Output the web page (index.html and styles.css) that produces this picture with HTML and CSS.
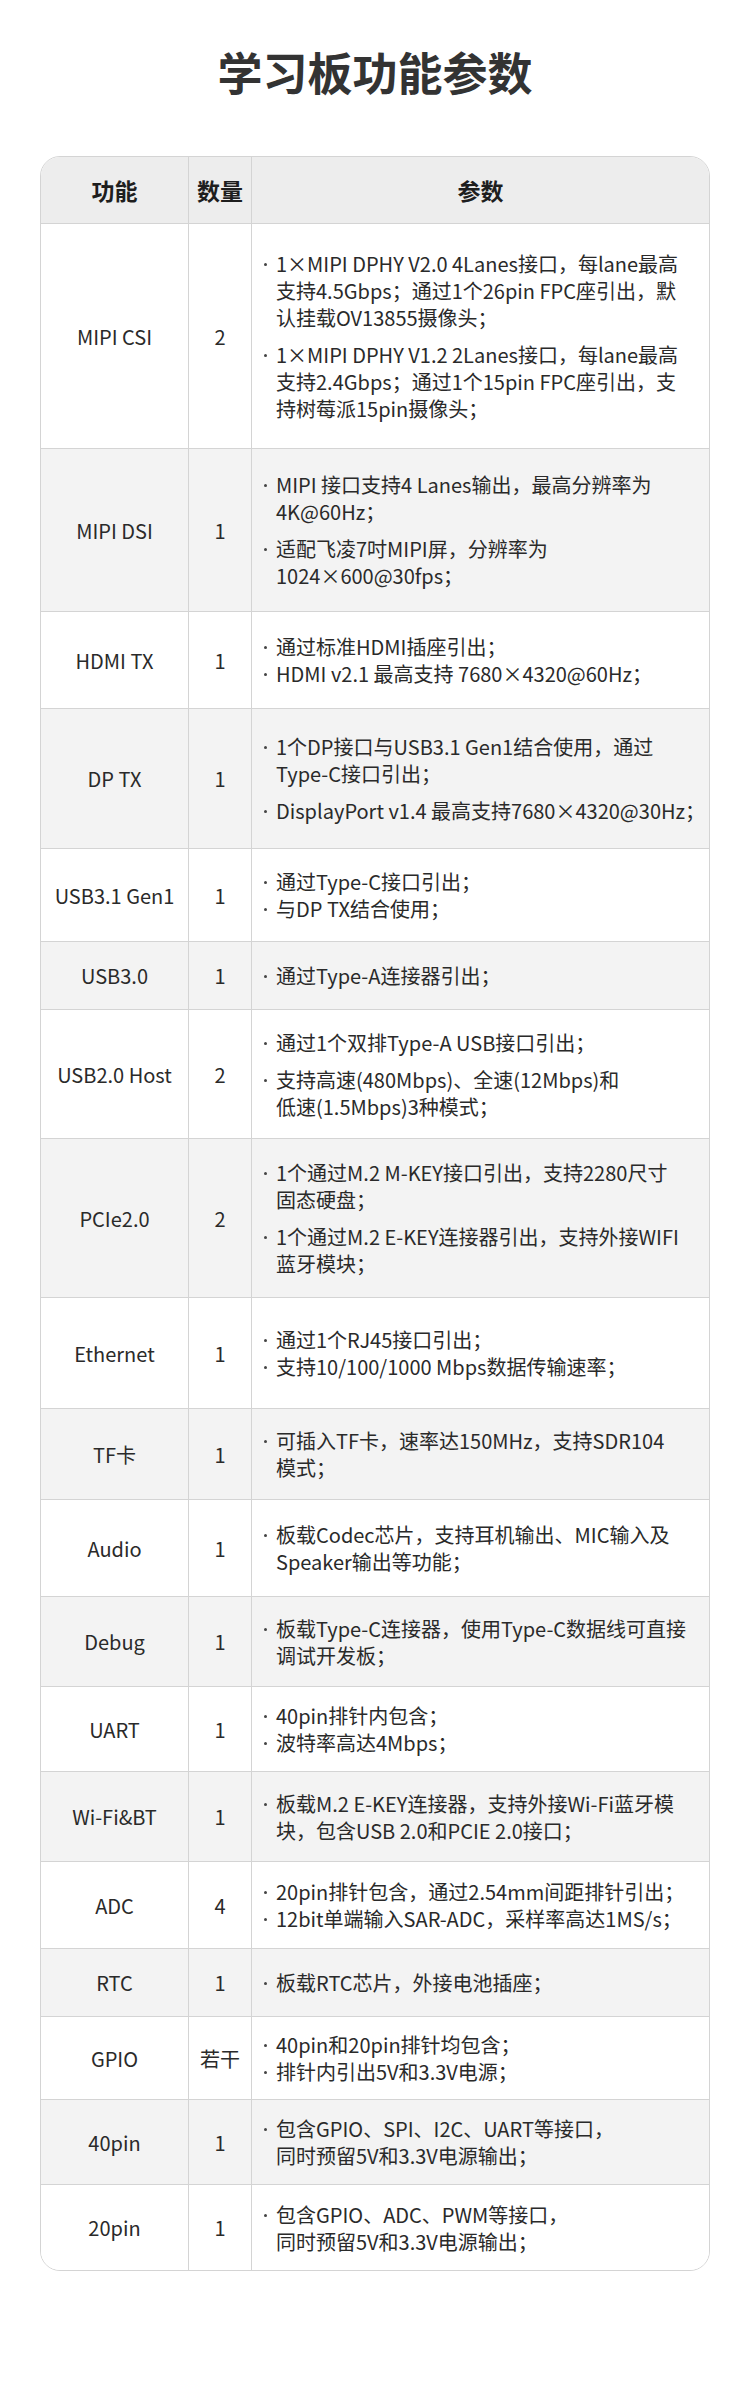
FILE: index.html
```html
<!DOCTYPE html>
<html lang="zh-CN">
<head>
<meta charset="utf-8">
<title>学习板功能参数</title>
<link rel="stylesheet" href="styles.css">
</head>
<body>
<main class="page">
  <h1 class="title">学习板功能参数</h1>
  <div class="spec">
    <div class="row head">
      <div class="cell">功能</div>
      <div class="cell">数量</div>
      <div class="cell">参数</div>
    </div>
    <div class="row">
      <div class="cell name">MIPI CSI</div>
      <div class="cell num">2</div>
      <div class="cell params spaced">
        <div class="item">1×MIPI DPHY V2.0 4Lanes接口，每lane最高<br>支持4.5Gbps；通过1个26pin FPC座引出，默<br>认挂载OV13855摄像头；</div>
        <div class="item">1×MIPI DPHY V1.2 2Lanes接口，每lane最高<br>支持2.4Gbps；通过1个15pin FPC座引出，支<br>持树莓派15pin摄像头；</div>
      </div>
    </div>
    <div class="row alt">
      <div class="cell name">MIPI DSI</div>
      <div class="cell num">1</div>
      <div class="cell params spaced">
        <div class="item">MIPI 接口支持4 Lanes输出，最高分辨率为<br>4K@60Hz；</div>
        <div class="item">适配飞凌7吋MIPI屏，分辨率为<br>1024×600@30fps；</div>
      </div>
    </div>
    <div class="row">
      <div class="cell name">HDMI TX</div>
      <div class="cell num">1</div>
      <div class="cell params">
        <div class="item">通过标准HDMI插座引出；</div>
        <div class="item">HDMI v2.1 最高支持 7680×4320@60Hz；</div>
      </div>
    </div>
    <div class="row alt">
      <div class="cell name">DP TX</div>
      <div class="cell num">1</div>
      <div class="cell params spaced">
        <div class="item">1个DP接口与USB3.1 Gen1结合使用，通过<br>Type-C接口引出；</div>
        <div class="item">DisplayPort v1.4 最高支持7680×4320@30Hz；</div>
      </div>
    </div>
    <div class="row">
      <div class="cell name">USB3.1 Gen1</div>
      <div class="cell num">1</div>
      <div class="cell params">
        <div class="item">通过Type-C接口引出；</div>
        <div class="item">与DP TX结合使用；</div>
      </div>
    </div>
    <div class="row alt">
      <div class="cell name">USB3.0</div>
      <div class="cell num">1</div>
      <div class="cell params">
        <div class="item">通过Type-A连接器引出；</div>
      </div>
    </div>
    <div class="row">
      <div class="cell name">USB2.0 Host</div>
      <div class="cell num">2</div>
      <div class="cell params spaced">
        <div class="item">通过1个双排Type-A USB接口引出；</div>
        <div class="item">支持高速(480Mbps)、全速(12Mbps)和<br>低速(1.5Mbps)3种模式；</div>
      </div>
    </div>
    <div class="row alt">
      <div class="cell name">PCIe2.0</div>
      <div class="cell num">2</div>
      <div class="cell params spaced">
        <div class="item">1个通过M.2 M-KEY接口引出，支持2280尺寸<br>固态硬盘；</div>
        <div class="item">1个通过M.2 E-KEY连接器引出，支持外接WIFI<br>蓝牙模块；</div>
      </div>
    </div>
    <div class="row">
      <div class="cell name">Ethernet</div>
      <div class="cell num">1</div>
      <div class="cell params">
        <div class="item">通过1个RJ45接口引出；</div>
        <div class="item">支持10/100/1000 Mbps数据传输速率；</div>
      </div>
    </div>
    <div class="row alt">
      <div class="cell name">TF卡</div>
      <div class="cell num">1</div>
      <div class="cell params">
        <div class="item">可插入TF卡，速率达150MHz，支持SDR104<br>模式；</div>
      </div>
    </div>
    <div class="row">
      <div class="cell name">Audio</div>
      <div class="cell num">1</div>
      <div class="cell params">
        <div class="item">板载Codec芯片，支持耳机输出、MIC输入及<br>Speaker输出等功能；</div>
      </div>
    </div>
    <div class="row alt">
      <div class="cell name">Debug</div>
      <div class="cell num">1</div>
      <div class="cell params">
        <div class="item">板载Type-C连接器，使用Type-C数据线可直接<br>调试开发板；</div>
      </div>
    </div>
    <div class="row">
      <div class="cell name">UART</div>
      <div class="cell num">1</div>
      <div class="cell params">
        <div class="item">40pin排针内包含；</div>
        <div class="item">波特率高达4Mbps；</div>
      </div>
    </div>
    <div class="row alt">
      <div class="cell name">Wi-Fi&amp;BT</div>
      <div class="cell num">1</div>
      <div class="cell params">
        <div class="item">板载M.2 E-KEY连接器，支持外接Wi-Fi蓝牙模<br>块，包含USB 2.0和PCIE 2.0接口；</div>
      </div>
    </div>
    <div class="row">
      <div class="cell name">ADC</div>
      <div class="cell num">4</div>
      <div class="cell params">
        <div class="item">20pin排针包含，通过2.54mm间距排针引出；</div>
        <div class="item">12bit单端输入SAR-ADC，采样率高达1MS/s；</div>
      </div>
    </div>
    <div class="row alt">
      <div class="cell name">RTC</div>
      <div class="cell num">1</div>
      <div class="cell params">
        <div class="item">板载RTC芯片，外接电池插座；</div>
      </div>
    </div>
    <div class="row">
      <div class="cell name">GPIO</div>
      <div class="cell num">若干</div>
      <div class="cell params">
        <div class="item">40pin和20pin排针均包含；</div>
        <div class="item">排针内引出5V和3.3V电源；</div>
      </div>
    </div>
    <div class="row alt">
      <div class="cell name">40pin</div>
      <div class="cell num">1</div>
      <div class="cell params">
        <div class="item">包含GPIO、SPI、I2C、UART等接口，<br>同时预留5V和3.3V电源输出；</div>
      </div>
    </div>
    <div class="row">
      <div class="cell name">20pin</div>
      <div class="cell num">1</div>
      <div class="cell params">
        <div class="item">包含GPIO、ADC、PWM等接口，<br>同时预留5V和3.3V电源输出；</div>
      </div>
    </div>
  </div>
</main>
</body>
</html>
```

FILE: styles.css
```css
html, body {
  margin: 0;
  padding: 0;
  background: #ffffff;
}

body {
  font-family: "Noto Sans CJK SC", "Noto Sans", sans-serif;
  color: #2a2a2a;
}

.page {
  width: 750px;
  padding-top: 49px;
  box-sizing: border-box;
}

.title {
  margin: 0;
  font-size: 45px;
  line-height: 45px;
  font-weight: 700;
  text-align: center;
  color: #333333;
}

.spec {
  margin: 62px 0 0 40px;
  width: 670px;
  box-sizing: border-box;
  border: 1px solid #d4d4d4;
  border-radius: 20px;
  overflow: hidden;
  display: grid;
  grid-template-columns: 1fr;
  grid-template-rows: 66px 225px 163px 97px 140px 93px 68px 129px 159px 111px 91px 97px 90px 85px 90px 87px 68px 83px 85px 86px;
}

.row {
  display: grid;
  grid-template-columns: 148px 63px 1fr;
  background: #ffffff;
  border-top: 1px solid #d4d4d4;
}

.row.head {
  border-top: none;
  background: #ededed;
}

.row.alt {
  background: #f3f3f3;
}

.cell {
  display: flex;
  align-items: center;
  justify-content: center;
  border-right: 1px solid #d4d4d4;
  font-size: 20px;
  line-height: 27px;
  color: #2a2a2a;
}

.cell:last-child {
  border-right: none;
}

.head .cell {
  font-size: 23px;
  font-weight: 700;
  color: #1e1e1e;
}

.params {
  flex-direction: column;
  align-items: flex-start;
  justify-content: center;
  padding: 0 4px 0 9px;
}

.item {
  position: relative;
  padding-left: 15px;
  white-space: nowrap;
}

.item::before {
  content: "";
  position: absolute;
  left: 3px;
  top: 13px;
  width: 3px;
  height: 3px;
  border-radius: 50%;
  background: #444444;
}

.spaced .item + .item {
  margin-top: 10px;
}
```
